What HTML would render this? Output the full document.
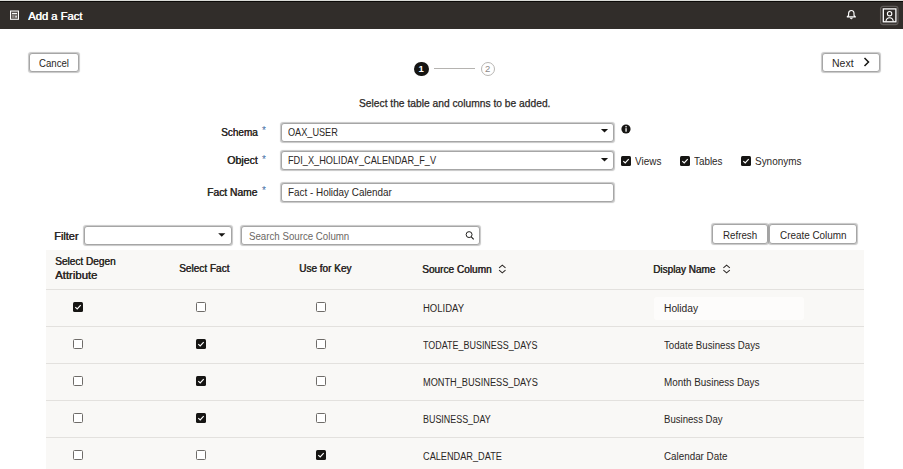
<!DOCTYPE html>
<html><head><meta charset="utf-8">
<style>
*{box-sizing:border-box;margin:0;padding:0}
html,body{width:903px;height:469px;overflow:hidden;background:#fff}
body{position:relative;font-family:"Liberation Sans",sans-serif;color:#2b2725;font-size:10px}
.a{position:absolute;white-space:nowrap}
.t{position:absolute;white-space:nowrap;transform-origin:0 0}
.hdr{position:absolute;left:0;top:0;width:903px;height:29px;background:#312d2a;border-top:1px solid #dadbd7}
.hdr .line{position:absolute;left:0;top:0;width:903px;height:1px;background:#0c0a08}
.btn{position:absolute;border:1px solid #a6a6a6;border-radius:3px;background:#fff;box-shadow:0 0 0.9px 0.2px rgba(0,0,0,0.22)}
.inp{position:absolute;border:1px solid #a6a6a6;border-radius:3px;background:#fff;box-shadow:0 0 0.9px 0.2px rgba(0,0,0,0.22)}
.ast{position:absolute;color:#3f6ea3;font-size:10px;line-height:10px}
.tri{position:absolute;width:0;height:0;border-left:3.5px solid transparent;border-right:3.5px solid transparent;border-top:4px solid #161513}
.cb{position:absolute;width:10px;height:10px;border:1px solid #6f6c69;border-radius:1.5px;background:#fff}
.cbc{position:absolute;width:10px;height:10px;border-radius:1.5px;background:#161513}
.cbc svg{position:absolute;left:0;top:0}
.tbl{position:absolute;left:46px;top:250px;width:818px;height:219px;background:#f9f8f6}
.hl{position:absolute;left:46px;width:818px;height:1px;background:#e3e1de}
</style></head><body>
<div class="hdr"><div class="line"></div></div>
<svg class="a" style="left:0;top:0" width="30" height="29" viewBox="0 0 30 29">
<rect x="10.5" y="11" width="8" height="8.3" fill="#5a5552" stroke="#fff" stroke-width="1"/>
<line x1="12" y1="13.6" x2="17" y2="13.6" stroke="#fff" stroke-width="1.1"/>
<rect x="12" y="15" width="2.5" height="2.8" fill="#8a8582"/>
<rect x="15.2" y="15.6" width="1.8" height="2" fill="#d8d8d8"/>
</svg>
<svg class="a" style="left:840px;top:4px" width="63" height="24" viewBox="0 0 63 24">
<path d="M11.3 6.5 C9.4 6.5 8.6 7.9 8.6 9.6 L8.6 11.4 L7.2 12.9 L15.4 12.9 L14 11.4 L14 9.6 C14 7.9 13.2 6.5 11.3 6.5 Z" fill="none" stroke="#fff" stroke-width="1.15" stroke-linejoin="round"/>
<path d="M9.9 13.9 L12.7 13.9 L11.3 15 Z" fill="#fff" stroke="#fff" stroke-width="0.5"/>
<rect x="40.6" y="2.4" width="17.4" height="18.1" rx="2.5" fill="#2f2b28" stroke="#5f5b58" stroke-width="1.3"/>
<rect x="43.3" y="4.9" width="12.6" height="12.9" fill="#2f2b28" stroke="#fff" stroke-width="1.3"/>
<circle cx="49.6" cy="9.7" r="2.2" fill="none" stroke="#fff" stroke-width="1.1"/>
<path d="M45.9 17.5 C46.3 14.9 47.6 13.8 49.6 13.8 C51.6 13.8 52.9 14.9 53.3 17.5" fill="none" stroke="#fff" stroke-width="1.1"/>
</svg>

<div class="btn" style="left:29px;top:53px;width:49.5px;height:19px"></div>
<div class="btn" style="left:822px;top:53px;width:57.5px;height:19px"></div>
<svg class="a" style="left:862px;top:56px" width="10" height="12" viewBox="0 0 10 12">
<path d="M2.5 2 L6.5 6 L2.5 10" fill="none" stroke="#161513" stroke-width="1.5"/>
</svg>

<div class="a" style="left:414px;top:61.5px;width:14.5px;height:14.5px;border-radius:50%;background:#161513"></div>
<div class="a" style="left:414px;top:63.5px;width:14.5px;text-align:center;color:#fff;font-size:9.5px;line-height:10px;font-weight:bold">1</div>
<div class="a" style="left:434px;top:68px;width:41px;height:1px;background:#b5b3b0"></div>
<div class="a" style="left:480.5px;top:61.5px;width:14.5px;height:14.5px;border-radius:50%;border:1.2px solid #b8b6b3;background:#fff"></div>
<div class="a" style="left:480.5px;top:63.5px;width:14.5px;text-align:center;color:#8d8a87;font-size:9.5px;line-height:10px">2</div>

<div class="ast" style="left:262px;top:126px">*</div>
<div class="inp" style="left:281px;top:122.5px;width:333px;height:19px"></div>
<svg class="a" style="left:0;top:0;overflow:visible" width="1" height="1"><path d="M600.9 128.9 L608.1 128.9 L604.5 132.6 Z" fill="#161513"/></svg>
<svg class="a" style="left:621px;top:124px" width="10" height="10" viewBox="0 0 10 10">
<circle cx="5" cy="5" r="4.6" fill="#161513"/>
<rect x="4.4" y="4.2" width="1.3" height="3.5" fill="#fff"/>
<circle cx="5.05" cy="2.7" r="0.8" fill="#fff"/>
</svg>

<div class="ast" style="left:262px;top:155px">*</div>
<div class="inp" style="left:281px;top:151px;width:333px;height:19px"></div>
<svg class="a" style="left:0;top:0;overflow:visible" width="1" height="1"><path d="M600.9 157.9 L608.1 157.9 L604.5 161.6 Z" fill="#161513"/></svg>

<div class="cbc" style="left:621px;top:156px"><svg width="10" height="10" viewBox="0 0 10 10"><path d="M2.3 5.1 L4.2 7 L7.7 3.1" fill="none" stroke="#fff" stroke-width="1.15"/></svg></div>
<div class="cbc" style="left:680px;top:156px"><svg width="10" height="10" viewBox="0 0 10 10"><path d="M2.3 5.1 L4.2 7 L7.7 3.1" fill="none" stroke="#fff" stroke-width="1.15"/></svg></div>
<div class="cbc" style="left:741px;top:156px"><svg width="10" height="10" viewBox="0 0 10 10"><path d="M2.3 5.1 L4.2 7 L7.7 3.1" fill="none" stroke="#fff" stroke-width="1.15"/></svg></div>

<div class="ast" style="left:262px;top:186px">*</div>
<div class="inp" style="left:281px;top:183px;width:333px;height:19px"></div>

<div class="inp" style="left:84px;top:226px;width:148px;height:19px"></div>
<svg class="a" style="left:0;top:0;overflow:visible" width="1" height="1"><path d="M218.2 233.2 L225.29999999999998 233.2 L221.75 236.79999999999998 Z" fill="#161513"/></svg>
<div class="inp" style="left:241px;top:226px;width:238.5px;height:19px"></div>
<svg class="a" style="left:0;top:0;overflow:visible" width="1" height="1">
<circle cx="469.1" cy="234.6" r="2.95" fill="none" stroke="#161513" stroke-width="0.95"/>
<line x1="471.3" y1="236.8" x2="473.7" y2="239.3" stroke="#161513" stroke-width="1.05"/>
</svg>
<div class="btn" style="left:712px;top:224px;width:55.5px;height:19.6px"></div>
<div class="btn" style="left:769px;top:224px;width:88px;height:19.6px"></div>

<div class="tbl"></div>
<svg class="a" style="left:0;top:0;overflow:visible" width="1" height="1">
<path d="M499.1 267.8 L502.3 265.1 L505.5 267.8 M499.1 270.2 L502.3 272.9 L505.5 270.2" fill="none" stroke="#2b2725" stroke-width="1.05"/>
<path d="M723.4 267.8 L726.6 265.1 L729.8 267.8 M723.4 270.2 L726.6 272.9 L729.8 270.2" fill="none" stroke="#2b2725" stroke-width="1.05"/>
</svg>

<div class="hl" style="top:289px"></div>
<div class="hl" style="top:326px"></div>
<div class="hl" style="top:363px"></div>
<div class="hl" style="top:400px"></div>
<div class="hl" style="top:437px"></div>
<div class="a" style="left:653.5px;top:297px;width:150.5px;height:22.5px;border-radius:3px;background:#fdfcfb"></div>
<div class="cbc" style="left:73px;top:302px"><svg width="10" height="10" viewBox="0 0 10 10"><path d="M2.3 5.1 L4.2 7 L7.7 3.1" fill="none" stroke="#fff" stroke-width="1.15"/></svg></div>
<div class="cb" style="left:196px;top:302px"></div>
<div class="cb" style="left:316px;top:302px"></div>
<div class="cb" style="left:73px;top:339px"></div>
<div class="cbc" style="left:196px;top:339px"><svg width="10" height="10" viewBox="0 0 10 10"><path d="M2.3 5.1 L4.2 7 L7.7 3.1" fill="none" stroke="#fff" stroke-width="1.15"/></svg></div>
<div class="cb" style="left:316px;top:339px"></div>
<div class="cb" style="left:73px;top:376px"></div>
<div class="cbc" style="left:196px;top:376px"><svg width="10" height="10" viewBox="0 0 10 10"><path d="M2.3 5.1 L4.2 7 L7.7 3.1" fill="none" stroke="#fff" stroke-width="1.15"/></svg></div>
<div class="cb" style="left:316px;top:376px"></div>
<div class="cb" style="left:73px;top:413px"></div>
<div class="cbc" style="left:196px;top:413px"><svg width="10" height="10" viewBox="0 0 10 10"><path d="M2.3 5.1 L4.2 7 L7.7 3.1" fill="none" stroke="#fff" stroke-width="1.15"/></svg></div>
<div class="cb" style="left:316px;top:413px"></div>
<div class="cb" style="left:73px;top:450px"></div>
<div class="cb" style="left:196px;top:450px"></div>
<div class="cbc" style="left:316px;top:450px"><svg width="10" height="10" viewBox="0 0 10 10"><path d="M2.3 5.1 L4.2 7 L7.7 3.1" fill="none" stroke="#fff" stroke-width="1.15"/></svg></div>
<div class="t" style="left:27.93px;top:10.80px;font-size:11.5px;line-height:11.5px;color:#fff;text-shadow:0.45px 0 0 #fff;transform:scaleX(0.9763)">Add a Fact</div>
<div class="t" style="left:39.02px;top:57.50px;font-size:11px;line-height:11px;color:#2b2725;transform:scaleX(0.8746)">Cancel</div>
<div class="t" style="left:831.97px;top:57.50px;font-size:11px;line-height:11px;color:#2b2725;transform:scaleX(0.9528)">Next</div>
<div class="t" style="left:359.19px;top:97.90px;font-size:11px;line-height:11px;color:#2b2725;-webkit-text-stroke:0.25px #2b2725;transform:scaleX(0.9316)">Select the table and columns to be added.</div>
<div class="t" style="left:221.00px;top:126.70px;font-size:11px;line-height:11px;color:#2b2725;text-shadow:0.45px 0 0 #2b2725;transform:scaleX(0.9066)">Schema</div>
<div class="t" style="left:226.86px;top:155.10px;font-size:11px;line-height:11px;color:#2b2725;text-shadow:0.45px 0 0 #2b2725;transform:scaleX(0.9636)">Object</div>
<div class="t" style="left:207.28px;top:186.70px;font-size:11px;line-height:11px;color:#2b2725;text-shadow:0.45px 0 0 #2b2725;transform:scaleX(0.9334)">Fact Name</div>
<div class="t" style="left:287.95px;top:126.80px;font-size:11px;line-height:11px;color:#2b2725;transform:scaleX(0.8310)">OAX_USER</div>
<div class="t" style="left:288.45px;top:155.00px;font-size:11px;line-height:11px;color:#2b2725;transform:scaleX(0.8363)">FDI_X_HOLIDAY_CALENDAR_F_V</div>
<div class="t" style="left:287.91px;top:186.70px;font-size:11px;line-height:11px;color:#2b2725;transform:scaleX(0.8990)">Fact - Holiday Calendar</div>
<div class="t" style="left:635.00px;top:155.60px;font-size:11px;line-height:11px;color:#2b2725;transform:scaleX(0.9053)">Views</div>
<div class="t" style="left:694.11px;top:155.60px;font-size:11px;line-height:11px;color:#2b2725;transform:scaleX(0.8958)">Tables</div>
<div class="t" style="left:755.10px;top:155.60px;font-size:11px;line-height:11px;color:#2b2725;transform:scaleX(0.9053)">Synonyms</div>
<div class="t" style="left:53.64px;top:230.70px;font-size:11px;line-height:11px;color:#2b2725;text-shadow:0.45px 0 0 #2b2725;transform:scaleX(0.9965)">Filter</div>
<div class="t" style="left:248.82px;top:230.50px;font-size:11px;line-height:11px;color:#6b6764;transform:scaleX(0.8816)">Search Source Column</div>
<div class="t" style="left:722.91px;top:229.50px;font-size:11px;line-height:11px;color:#2b2725;transform:scaleX(0.8868)">Refresh</div>
<div class="t" style="left:780.01px;top:229.50px;font-size:11px;line-height:11px;color:#2b2725;transform:scaleX(0.9000)">Create Column</div>
<div class="t" style="left:55.40px;top:255.70px;font-size:11px;line-height:11px;color:#2b2725;text-shadow:0.45px 0 0 #2b2725;transform:scaleX(0.9160)">Select Degen</div>
<div class="t" style="left:55.32px;top:269.90px;font-size:11px;line-height:11px;color:#2b2725;text-shadow:0.45px 0 0 #2b2725;transform:scaleX(1.0300)">Attribute</div>
<div class="t" style="left:178.90px;top:263.10px;font-size:11px;line-height:11px;color:#2b2725;text-shadow:0.45px 0 0 #2b2725;transform:scaleX(0.9139)">Select Fact</div>
<div class="t" style="left:298.90px;top:263.10px;font-size:11px;line-height:11px;color:#2b2725;text-shadow:0.45px 0 0 #2b2725;transform:scaleX(0.9099)">Use for Key</div>
<div class="t" style="left:422.00px;top:264.20px;font-size:11px;line-height:11px;color:#2b2725;text-shadow:0.45px 0 0 #2b2725;transform:scaleX(0.9165)">Source Column</div>
<div class="t" style="left:653.20px;top:263.50px;font-size:11px;line-height:11px;color:#2b2725;text-shadow:0.45px 0 0 #2b2725;transform:scaleX(0.9083)">Display Name</div>
<div class="t" style="left:422.73px;top:303.70px;font-size:10px;line-height:10px;color:#2b2725;transform:scaleX(0.9506)">HOLIDAY</div>
<div class="t" style="left:663.99px;top:304.20px;font-size:10px;line-height:10px;color:#2b2725;transform:scaleX(1.0230)">Holiday</div>
<div class="t" style="left:422.76px;top:340.70px;font-size:10px;line-height:10px;color:#2b2725;transform:scaleX(0.8955)">TODATE_BUSINESS_DAYS</div>
<div class="t" style="left:664.02px;top:341.20px;font-size:10px;line-height:10px;color:#2b2725;transform:scaleX(0.9688)">Todate Business Days</div>
<div class="t" style="left:422.75px;top:377.70px;font-size:10px;line-height:10px;color:#2b2725;transform:scaleX(0.9196)">MONTH_BUSINESS_DAYS</div>
<div class="t" style="left:664.01px;top:378.20px;font-size:10px;line-height:10px;color:#2b2725;transform:scaleX(0.9872)">Month Business Days</div>
<div class="t" style="left:422.76px;top:414.70px;font-size:10px;line-height:10px;color:#2b2725;transform:scaleX(0.8923)">BUSINESS_DAY</div>
<div class="t" style="left:664.02px;top:415.20px;font-size:10px;line-height:10px;color:#2b2725;transform:scaleX(0.9593)">Business Day</div>
<div class="t" style="left:422.75px;top:451.70px;font-size:10px;line-height:10px;color:#2b2725;transform:scaleX(0.9180)">CALENDAR_DATE</div>
<div class="t" style="left:664.01px;top:452.20px;font-size:10px;line-height:10px;color:#2b2725;transform:scaleX(0.9829)">Calendar Date</div>
</body></html>
